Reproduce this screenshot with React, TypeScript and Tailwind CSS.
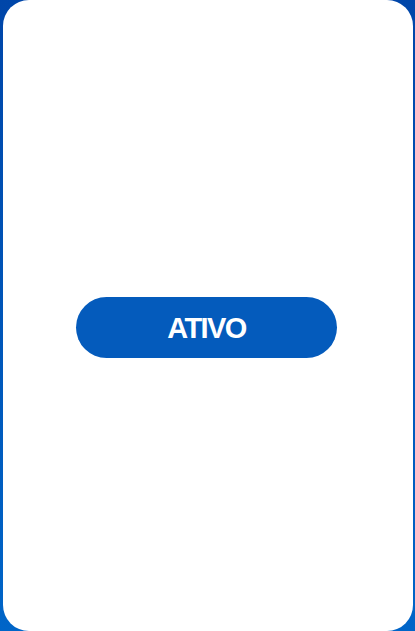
import React from "react";

const App: React.FC = () => {
  return (
    <div className="h-[631px] w-full overflow-hidden bg-gradient-to-b from-[#0046a9] to-[#0065c8] pl-[3px] pr-[2px]">
      <div className="flex h-[631px] items-center justify-center rounded-[26px] bg-white pt-[24px]">
        <button
          className="mr-[3px] flex h-[61px] w-[261px] items-center justify-center rounded-full bg-[#045bbc] pt-[2px] text-[29px] font-bold tracking-[-1.6px] text-white"
          style={{ fontFamily: '"Liberation Sans", Arial, sans-serif' }}
        >
          ATIVO
        </button>
      </div>
    </div>
  );
};

export default App;
